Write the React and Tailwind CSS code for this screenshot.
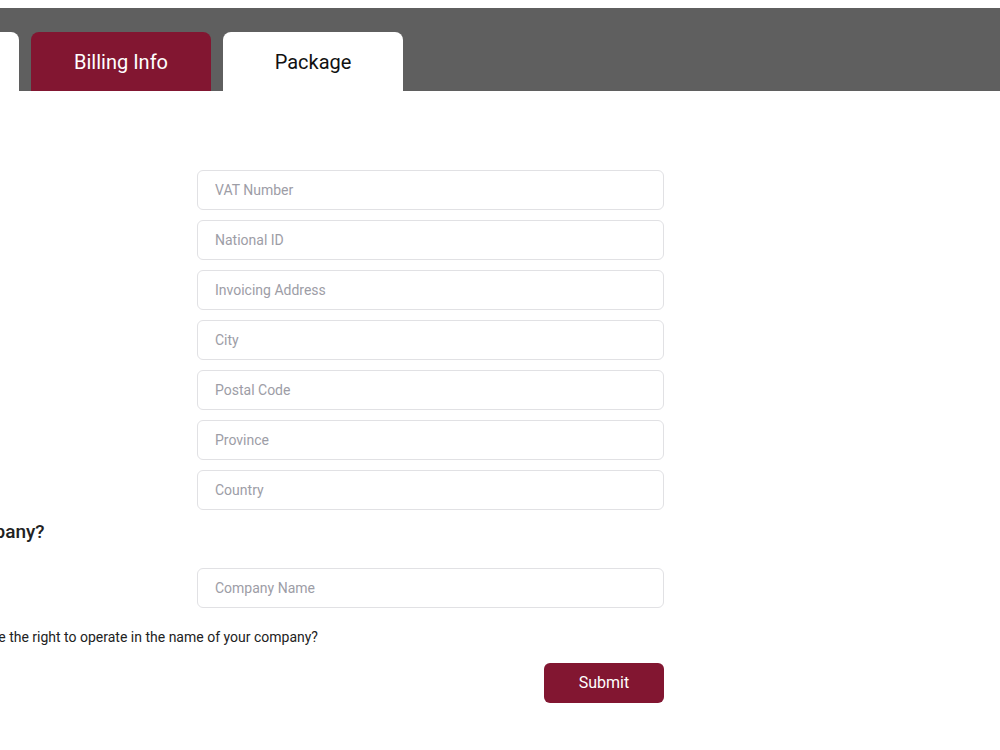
import React from 'react';

const fields = ['VAT Number', 'National ID', 'Invoicing Address', 'City', 'Postal Code', 'Province', 'Country'];

const Field = ({ placeholder }) => (
    <input
        type="text"
        placeholder={placeholder}
        className="w-[467px] h-10 rounded-md border border-[#e1e1e4] bg-white px-[17px] text-[14px] text-[#333] placeholder:text-[#9d9da6] focus:outline-none"
    />
);

const App = () => {
    return (
        <div className="w-[1000px] h-[750px] overflow-hidden bg-white font-['Roboto',sans-serif]">
            <div className="ml-[-200px] w-[1200px] pt-2">
                {/* Tabs */}
                <div className="h-[83px] bg-[#5f5f5f] flex items-end gap-3 pl-[39px]">
                    <div className="w-[180px] h-[59px] rounded-t-lg bg-white" />
                    <div className="w-[180px] h-[59px] rounded-t-lg bg-[#821631] flex items-center justify-center text-white text-[20px]">
                        Billing Info
                    </div>
                    <div className="w-[180px] h-[59px] rounded-t-lg bg-white flex items-center justify-center text-[#111] text-[20px]">
                        Package
                    </div>
                </div>

                {/* Form */}
                <form className="pt-[79px]">
                    <div className="ml-[397px] flex flex-col gap-[10px]">
                        {fields.map(f => <Field key={f} placeholder={f} />)}
                    </div>

                    <h3 className="ml-[73px] mt-[10px] text-[19px] leading-6 font-medium text-[#222]">
                        Are you a company?
                    </h3>

                    <div className="ml-[397px] mt-6">
                        <Field placeholder="Company Name" />
                    </div>

                    <p className="ml-[130px] mt-[19px] text-[14px] leading-5 text-[#222]">
                        Do you have the right to operate in the name of your company?
                    </p>

                    <div className="ml-[397px] w-[467px] mt-4 flex justify-end">
                        <button
                            type="submit"
                            className="w-[120px] h-10 rounded-md bg-[#821631] text-white text-[16px]"
                        >
                            Submit
                        </button>
                    </div>
                </form>
            </div>
        </div>
    );
};

export default App;
